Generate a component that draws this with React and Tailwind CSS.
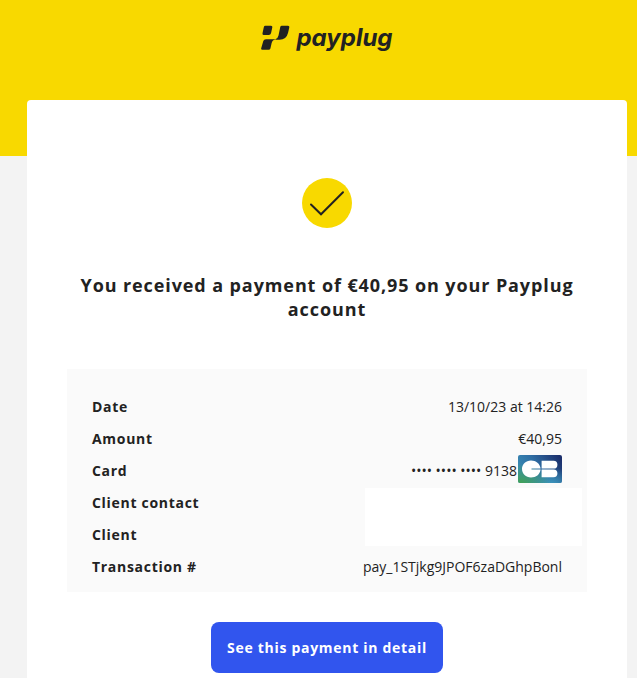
import React from 'react';

const PayplugMark = () => (
  <svg width="29" height="25" viewBox="0 0 29 25" fill="#222222" aria-hidden="true">
    <path d="M4.3 .8H10Q11.7 .8 11.3 2.4L10 8.2Q9.6 9.9 7.8 9.9H2.6Q1.1 9.9 1.5 8.3L2.8 2.2Q3.1 .8 4.3 .8Z" />
    <path d="M20.8 .8H27Q28.7 .8 28.3 2.4L27 8Q25.3 14.8 18.5 14.8H14.6Q14.3 14.8 14.4 14.3Q16.8 13.8 17.5 10.6L19.2 2.2Q19.5 .8 20.8 .8Z" />
    <path d="M5 14.3H13.6Q14 14.3 13.9 14.8Q11.4 15 10.6 18.2L9.4 23.4Q9 24.8 7.5 24.8H1.3Q-.2 24.8 .2 23.2L2.3 16Q2.8 14.3 5 14.3Z" />
  </svg>
);

const CheckBadge = () => (
  <svg className="mx-auto" width="50" height="50" viewBox="0 0 50 50" aria-hidden="true">
    <circle cx="25" cy="25" r="25" fill="#f8d900" />
    <path
      d="M9 26.5L19 36.3L41 14.3"
      fill="none"
      stroke="#222222"
      strokeWidth="2"
      strokeLinecap="round"
    />
  </svg>
);

const CardBrand = () => (
  <svg className="rounded-xs" width="44" height="28" viewBox="0 0 44 28" role="img" aria-label="CB">
    <defs>
      <linearGradient id="cb-blue" x1="0" y1="0.6" x2="1" y2="0.2">
        <stop offset="0" stopColor="#3a8fb7" />
        <stop offset="0.45" stopColor="#2f6da3" />
        <stop offset="1" stopColor="#1b2f6c" />
      </linearGradient>
      <radialGradient id="cb-green" cx="0.05" cy="1" r="0.7">
        <stop offset="0" stopColor="#41a156" />
        <stop offset="1" stopColor="#41a156" stopOpacity="0" />
      </radialGradient>
      <radialGradient id="cb-cyan" cx="0.75" cy="1.1" r="0.65">
        <stop offset="0" stopColor="#3e9bc0" />
        <stop offset="1" stopColor="#3e9bc0" stopOpacity="0" />
      </radialGradient>
    </defs>
    <rect width="44" height="28" fill="url(#cb-blue)" />
    <rect width="44" height="28" fill="url(#cb-cyan)" />
    <rect width="44" height="28" fill="url(#cb-green)" />
    <path
      fill="#fff"
      d="M13 5.5C18 5.5 22 8.5 22.6 13.6H13.5V14.4H22.6C22 19.4 18 22.4 13 22.4C7.8 22.4 4 18.8 4 14S7.8 5.5 13 5.5Z"
    />
    <path
      fill="#fff"
      d="M23.6 5.8H35.5A3.9 3.9 0 0 1 35.5 13.6H23.6ZM23.6 14.4H35.5A3.9 3.9 0 0 1 35.5 22.2H23.6Z"
    />
  </svg>
);

const rows = [
  { label: 'Date', value: '13/10/23 at 14:26' },
  { label: 'Amount', value: '€40,95' },
  { label: 'Card', value: '•••• •••• •••• 9138', brand: true },
  { label: 'Client contact', hidden: true },
  { label: 'Client' },
  { label: 'Transaction #', value: 'pay_1STjkg9JPOF6zaDGhpBonl' },
];

const PaymentDetails = () => (
  <div className="bg-[#fafafa] px-[25px] pt-[22px] pb-[9px]">
    <table className="w-full text-sm leading-8">
      <tbody>
        {rows.map((row) => (
          <tr key={row.label}>
            <th scope="row" className="p-0 text-left font-bold tracking-wider">
              {row.label}
            </th>
            {row.value && (
              <td className="p-0">
                <div className="flex items-start justify-end gap-px">
                  <span>{row.value}</span>
                  {row.brand && <CardBrand />}
                </div>
              </td>
            )}
            {/* blank block spanning both client rows */}
            {row.hidden && (
              <td rowSpan={2} className="p-0 pt-px align-top">
                <div className="-mr-5 ml-auto h-[58px] w-[217px] bg-white" />
              </td>
            )}
          </tr>
        ))}
      </tbody>
    </table>
  </div>
);

export default function App() {
  return (
    <div className="min-h-screen bg-[#f3f3f3] font-['Open_Sans',sans-serif] text-[#222222]">
      <header className="bg-[#f8d900] pt-[25px] pb-[106px] pl-[17px]">
        <div className="flex h-[25px] items-center justify-center gap-1.5">
          <PayplugMark />
          <span className="font-[Inter,sans-serif] text-2xl leading-6 font-bold italic [font-feature-settings:'cv11']">
            payplug
          </span>
        </div>
      </header>

      <main className="-mt-14 mr-2.5 ml-[27px] min-h-[578px] rounded-t bg-white px-10 pt-[78px]">
        <CheckBadge />
        <h1 className="mt-[45px] text-center text-lg leading-6 font-bold tracking-wider">
          You received a payment of €40,95 on your Payplug account
        </h1>
        <div className="mt-12">
          <PaymentDetails />
        </div>
        <div className="mt-[30px] text-center">
          <a
            href="#payment"
            className="inline-block rounded-lg bg-[#3155ee] px-4 py-[15px] text-sm leading-[21px] font-bold tracking-wider text-white"
          >
            See this payment in detail
          </a>
        </div>
      </main>
    </div>
  );
}
